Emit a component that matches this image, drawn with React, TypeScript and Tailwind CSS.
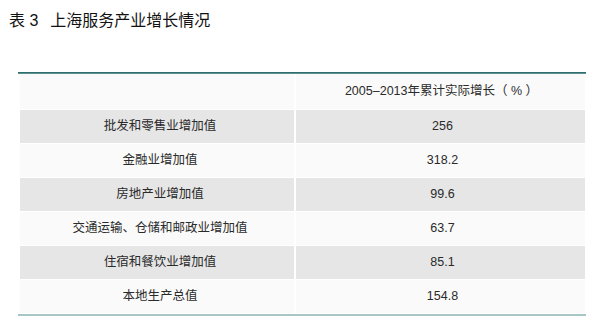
import React from "react";

const rows: [string, string][] = [
  ["批发和零售业增加值", "256"],
  ["金融业增加值", "318.2"],
  ["房地产业增加值", "99.6"],
  ["交通运输、仓储和邮政业增加值", "63.7"],
  ["住宿和餐饮业增加值", "85.1"],
  ["本地生产总值", "154.8"],
];

export default function App() {
  return (
    <div
      className="w-[600px] h-[323px] bg-white text-[#2a2a2a]"
      style={{ fontFamily: '"Liberation Sans", "Noto Sans CJK SC", sans-serif' }}
    >
      <div className="pl-[9px] pt-[11px] h-[72px] text-[16px] leading-[20px] text-[#111]">
        <span>表 3</span>
        <span className="ml-[12px]">上海服务产业增长情况</span>
      </div>
      <div className="ml-[18px] w-[568px]">
        <div className="h-[2px] bg-[#2f6e6e] border-b border-[#5e9090]" />
        <div className="flex flex-col gap-[1px] pl-[2px] pr-[1px]">
          <div className="grid grid-cols-[274px_1fr] gap-[2px] h-[35px] text-[12.5px]">
            <div className="bg-[#fafafa]" />
            <div className="bg-[#fafafa] flex items-center justify-center pl-[2px]">
              2005–2013年累计实际增长（ % ）
            </div>
          </div>
          {rows.map(([k, v], i) => (
            <div
              key={k}
              className="grid grid-cols-[274px_1fr] gap-[2px] h-[33px] text-[12.5px]"
            >
              <div
                className={
                  (i % 2 === 0 ? "bg-[#e6e6e6]" : "bg-[#fafafa]") +
                  " flex items-center justify-center pl-[6px]"
                }
              >
                {k}
              </div>
              <div
                className={
                  (i % 2 === 0 ? "bg-[#e6e6e6]" : "bg-[#fafafa]") +
                  " flex items-center justify-center pl-[4px]"
                }
              >
                {v}
              </div>
            </div>
          ))}
        </div>
        <div className="mt-[1px] h-[2px] bg-[#a7c7c7]" />
      </div>
    </div>
  );
}
